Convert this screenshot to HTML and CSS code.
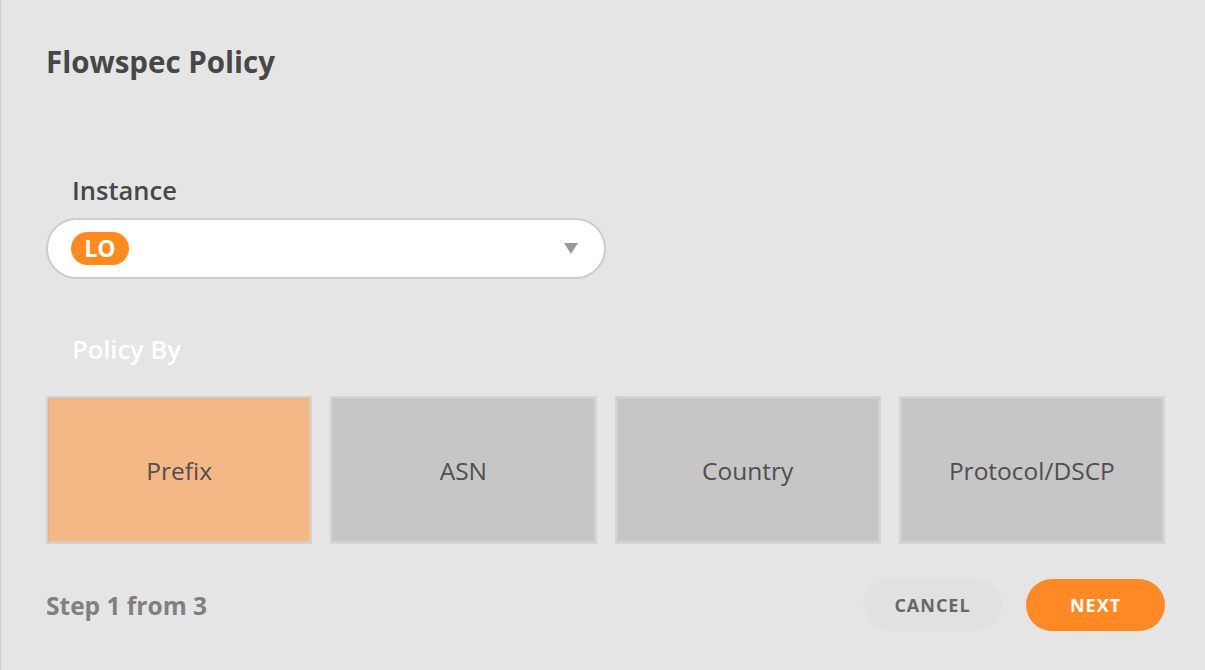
FILE: index.html
```html
<!DOCTYPE html>
<html>
<head>
<meta charset="utf-8">
<link rel="stylesheet" href="styles.css">
</head>
<body>
<div class="dialog">
  <h1 class="title">Flowspec Policy</h1>
  <div class="field">
    <div class="label">Instance</div>
    <div class="select">
      <span class="badge">LO</span>
      <span class="caret"></span>
    </div>
  </div>
  <div class="field policy">
    <div class="label light">Policy By</div>
    <div class="options">
      <div class="option active">Prefix</div>
      <div class="option">ASN</div>
      <div class="option">Country</div>
      <div class="option">Protocol/DSCP</div>
    </div>
  </div>
  <div class="footer">
    <div class="step">Step 1 from 3</div>
    <div class="actions">
      <button class="btn cancel">CANCEL</button>
      <button class="btn next">NEXT</button>
    </div>
  </div>
</div>
</body>
</html>
```
FILE: styles.css
```css
html, body {
  margin: 0;
  padding: 0;
  background: #e5e5e5;
  font-family: "Open Sans", "Noto Sans", sans-serif;
}
.dialog {
  box-sizing: border-box;
  height: 670px;
  border-left: 1px solid #cfcfcf;
  padding: 42px 40px 0 45px;
}
.title {
  margin: 0;
  font-size: 29.5px;
  font-weight: 700;
  color: #474747;
  line-height: 40px;
}
.field {
  margin-top: 92px;
}
.label {
  padding-left: 26px;
  font-size: 25.5px;
  font-weight: 600;
  color: #474747;
  line-height: 32px;
}
.label.light {
  color: #ffffff;
}
.select {
  margin-top: 12px;
  box-sizing: border-box;
  width: 560px;
  height: 61px;
  border: 2px solid #cccccc;
  border-radius: 31px;
  background: #ffffff;
  display: flex;
  align-items: center;
  justify-content: space-between;
  padding: 0 26px 0 23px;
}
.badge {
  display: inline-flex;
  align-items: center;
  justify-content: center;
  width: 58px;
  height: 33px;
  border-radius: 17px;
  background: #ff8a1d;
  color: #ffffff;
  font-weight: 700;
  font-size: 23px;
  line-height: 1;
}
.caret {
  width: 0;
  height: 0;
  border-left: 7px solid transparent;
  border-right: 7px solid transparent;
  border-top: 11px solid #999999;
}
.policy {
  margin-top: 54px;
}
.options {
  margin-top: 31px;
  display: flex;
  gap: 18px;
}
.option {
  flex: 1;
  box-sizing: border-box;
  height: 148px;
  border: 2px solid #d4d4d4;
  box-shadow: inset -1px -1px 0 #cfcfcf, inset 1px 1px 0 #cccccc;
  background: #c6c6c6;
  display: flex;
  align-items: center;
  justify-content: center;
  font-size: 24.5px;
  color: #4f4f4f;
}
.option.active {
  background: #f4b886;
  border-color: #d2d2d2;
  box-shadow: inset -1px -1px 0 #e8c5a6, inset 1px 1px 0 #e0b38c;
}
.footer {
  margin-top: 35px;
  display: flex;
  align-items: center;
  justify-content: space-between;
}
.step {
  font-size: 24.5px;
  font-weight: 700;
  color: #808080;
}
.actions {
  display: flex;
  gap: 24px;
}
.btn {
  width: 139px;
  height: 52px;
  border: none;
  border-radius: 26px;
  font-family: "Open Sans", "Noto Sans", sans-serif;
  font-weight: 700;
  font-size: 18px;
  letter-spacing: 1px;
  cursor: pointer;
}
.btn.cancel {
  background: #e1e1e1;
  color: #676767;
}
.btn.next {
  background: #ff8a25;
  color: #ffffff;
}
```
